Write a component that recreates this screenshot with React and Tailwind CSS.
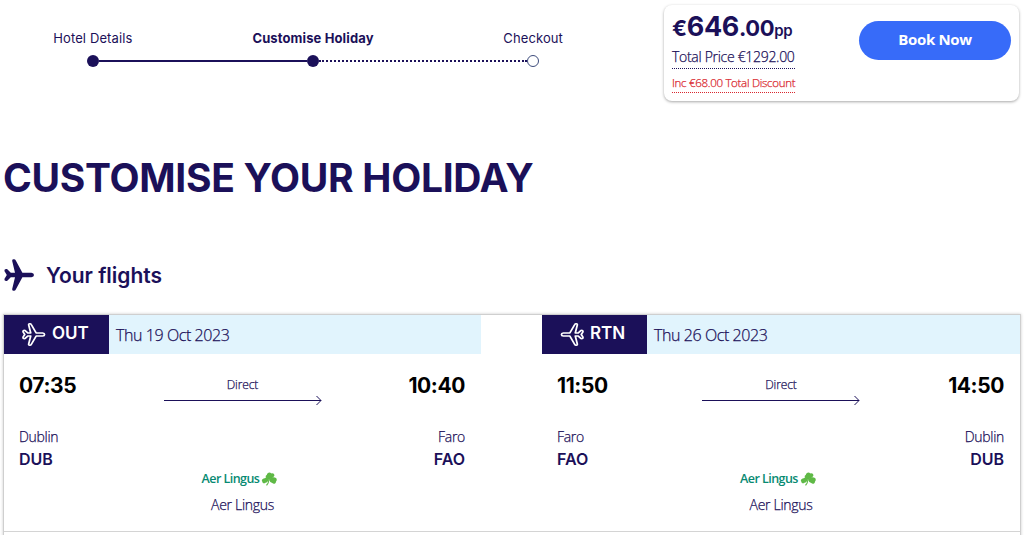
import React from "react";

const LIGHT = "font-['Open_Sans','Noto_Sans',sans-serif] font-light [-webkit-text-stroke:0.25px_currentColor]";

function Step({ className, children }) {
  return <span className={`text-center whitespace-nowrap ${className}`}>{children}</span>;
}

function Stepper() {
  return (
    <div className="w-[626px] pt-7 text-[13px] leading-5 text-[#1b1059]">
      <div className="flex">
        <Step className="w-[186px] tracking-[0.12px]">Hotel Details</Step>
        <Step className="w-[255px] font-bold tracking-[0.12px]">Customise Holiday</Step>
        <Step className="w-[186px] tracking-[0.1px]">Checkout</Step>
      </div>
      <div className="mt-[7px] flex items-center pl-[87px]">
        <span className="size-3 rounded-full bg-[#1b1059]" />
        <span className="w-[208px] border-t-2 border-[#1b1059]" />
        <span className="size-3 rounded-full bg-[#1b1059]" />
        <span className="w-[208px] border-t-2 border-dotted border-[#1b1059]" />
        <span className="size-3 rounded-full border border-[#3d4c7c] bg-white" />
      </div>
    </div>
  );
}

function PriceCard() {
  return (
    <div className="mt-[5px] flex h-24 w-[355px] items-start justify-between rounded-lg bg-white pr-2 pl-2 shadow-[0_1px_3px_rgba(0,0,0,0.35)]">
      <div className="flex flex-col items-start whitespace-nowrap text-[#1b1059]">
        <div className="mt-1 h-9 leading-9 font-bold tracking-[-0.35px]">
          <span className="text-[22px]">€</span>
          <span className="text-[27px]">646</span>
          <span className="text-[22px]">.00</span>
          <span className="text-[15px] font-semibold">pp</span>
        </div>
        <div className={`h-6 border-b border-dotted border-[#1b1059] text-[14px] leading-[24px] tracking-[-0.3px] ${LIGHT}`}>
          Total Price €1292.00
        </div>
        <div className={`mt-1 h-5 border-b border-dotted border-[#d9272e] text-[11.5px] leading-[19px] tracking-[-0.3px] text-[#d9272e] ${LIGHT}`}>
          Inc €68.00 Total Discount
        </div>
      </div>
      <button className="mt-4 h-[39px] w-[152px] rounded-full bg-[#376bf9] pb-0.5 font-['Open_Sans',sans-serif] text-[15px] font-bold tracking-[-0.35px] text-white">
        Book Now
      </button>
    </div>
  );
}

const PLANE =
  "M8.2 2 Q7.8 .2 9.4 .2 H10 Q11.2 .2 11.8 1.4 L18.4 13.7 H27.4 Q30 14 30 16 Q30 18 27.4 18.3 H18.4 L11.8 30.6 Q11.2 31.8 10 31.8 H9.4 Q7.8 31.8 8.2 30 L11 18.3 H6.8 L3 22 Q.2 22.6 .4 20 L2.8 16 L.4 12 Q.2 9.4 3 10 L6.8 13.7 H11 Z";

function PlaneOutline({ flip }) {
  return (
    <svg viewBox="-1 -1 33 34" preserveAspectRatio="none" className={`h-[23px] w-6 shrink-0 ${flip ? "-scale-x-100" : ""}`} fill="none" stroke="white" strokeWidth="2.4" strokeLinejoin="round">
      <path d={PLANE} />
    </svg>
  );
}

function Shamrock() {
  return (
    <svg viewBox="0 0 16 14" className="h-[14px] w-4 shrink-0" fill="#5fb946">
      <path d="M8 8 C4.4 6.4 3.8 3.6 5.8 2.9 C6 .5 9 -.3 10.3 1.4 C12.6 .5 14.4 3 12.8 4.6 C12 6 10 6.8 8 8Z" />
      <path d="M8 7.8 C9.8 5.8 12.2 4.6 13.6 5.6 C15.8 5.6 16.4 8.2 15 9.4 C15 11.6 12.6 12.4 11.3 11 C9.8 10.8 8.8 9.6 8 7.8Z" />
      <path d="M7.8 7.8 C6.2 5.5 4.2 5.3 3.2 6.5 C1.2 6.6 .2 8.6 1.4 9.8 C1.5 11.4 3.4 11.8 4.4 10.8 C6 10.6 7 9.6 7.8 7.8Z" />
      <path d="M7.3 8 Q7.2 11 5 13 L6 13.7 Q8.4 11.2 8.2 8Z" />
    </svg>
  );
}

function Flight({ label, date, from, fromCode, to, toCode, depart, arrive, flip, width }) {
  return (
    <section className={width}>
      <header className="flex h-[39px] items-center bg-[#e1f4fd]">
        <div className="flex h-full w-[105px] items-center bg-[#1b1059] pl-[18px] text-[17px] font-semibold text-white">
          <PlaneOutline flip={flip} />
          <span className="ml-1.5 -mt-px">{label}</span>
        </div>
        <span className={`ml-[7px] text-[16px] tracking-[-0.42px] text-[#1b1059] ${LIGHT}`}>{date}</span>
      </header>
      <div className="flex justify-between pr-4 pl-[15px]">
        <div>
          <div className="mt-[18px] text-[21px] leading-7 font-bold tracking-[-0.4px] text-black">{depart}</div>
          <div className={`mt-[27px] text-[14px] leading-5 tracking-[-0.3px] text-[#1b1059] ${LIGHT}`}>{from}</div>
          <div className="mt-0.5 text-[16px] leading-5 font-semibold text-[#1b1059]">{fromCode}</div>
        </div>
        <div>
          <div className="mt-[18px] text-right text-[21px] leading-7 font-bold tracking-[-0.4px] text-black">{arrive}</div>
          <div className={`mt-[27px] text-right text-[14px] leading-5 tracking-[-0.3px] text-[#1b1059] ${LIGHT}`}>{to}</div>
          <div className="mt-0.5 text-right text-[16px] leading-5 font-semibold text-[#1b1059]">{toCode}</div>
        </div>
      </div>
      <div className="-mt-[94px] flex flex-col items-center text-[#1b1059]">
        <span className={`text-[12px] leading-5 tracking-[-0.1px] ${LIGHT}`}>Direct</span>
        <svg viewBox="0 0 158 10" className="h-[10px] w-[158px]" fill="none" stroke="#1b1059">
          <path d="M0 5.5H157" />
          <path d="M152.5 1L157 5.5L152.5 10" />
        </svg>
        <div className="mt-16 mr-1.5 flex h-5 items-center gap-[2px] font-['Open_Sans',sans-serif] text-[12.5px] font-semibold tracking-[-0.55px] text-[#078a72]">
          <span>Aer Lingus</span>
          <Shamrock />
        </div>
        <span className={`mt-1.5 text-[14px] leading-5 tracking-[-0.3px] ${LIGHT}`}>Aer Lingus</span>
      </div>
    </section>
  );
}

export default function App() {
  return (
    <main className="h-[535px] w-[1024px] overflow-hidden bg-white font-['Inter',sans-serif]">
      <div className="flex h-[110px] justify-between pr-[5px]">
        <Stepper />
        <PriceCard />
      </div>
      <h1 className="mt-11 ml-[3px] text-[39px] leading-[48px] font-bold tracking-[-0.3px] whitespace-nowrap text-[#1b1059]">
        CUSTOMISE YOUR HOLIDAY
      </h1>
      <div className="mt-[57px] ml-1 flex h-8 items-center gap-3 text-[#1b1059]">
        <svg viewBox="0 0 30 32" className="h-8 w-[30px]" fill="currentColor">
          <path d={PLANE} />
        </svg>
        <h2 className="pt-0.5 text-[21px] leading-8 font-semibold">Your flights</h2>
      </div>
      <div className="mt-[23px] ml-[3px] h-[240px] w-[1018px] border border-[#cfcfcf] shadow-[0_0_3px_rgba(0,0,0,0.2)]">
        <div className="flex h-[217px] justify-between border-b border-[#d4d4d4]">
          <Flight width="w-[477px]" label="OUT" date="Thu 19 Oct 2023" depart="07:35" arrive="10:40" from="Dublin" fromCode="DUB" to="Faro" toCode="FAO" />
          <Flight width="w-[478px]" label="RTN" date="Thu 26 Oct 2023" depart="11:50" arrive="14:50" from="Faro" fromCode="FAO" to="Dublin" toCode="DUB" flip />
        </div>
      </div>
    </main>
  );
}
